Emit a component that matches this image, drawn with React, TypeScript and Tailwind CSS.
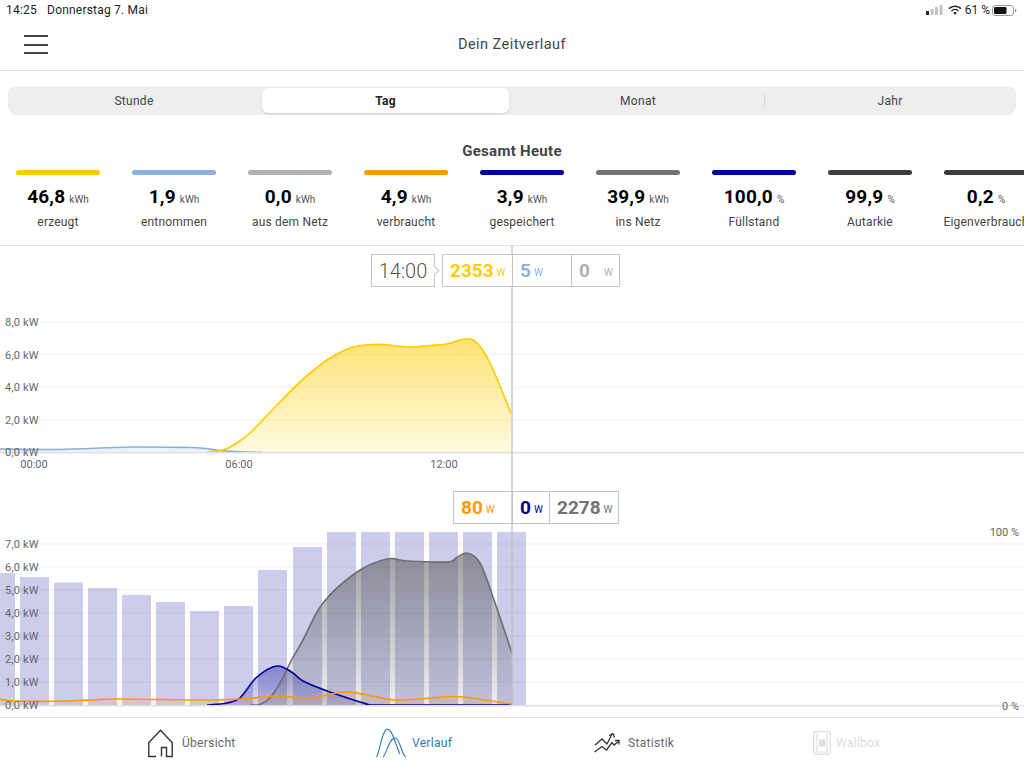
import { Fragment } from 'react'

type Pt = [number, number]

// catmull-rom through the points, gives the soft curves of the charts
const smooth = (pts: Pt[]) => {
  let d = `M${pts[0][0]} ${pts[0][1]}`
  for (let i = 0; i < pts.length - 1; i++) {
    const p0 = pts[i - 1] || pts[i]
    const p1 = pts[i]
    const p2 = pts[i + 1]
    const p3 = pts[i + 2] || p2
    const c1x = p1[0] + (p2[0] - p0[0]) / 6
    const c1y = p1[1] + (p2[1] - p0[1]) / 6
    const c2x = p2[0] - (p3[0] - p1[0]) / 6
    const c2y = p2[1] - (p3[1] - p1[1]) / 6
    d += ` C${c1x.toFixed(1)} ${c1y.toFixed(1)} ${c2x.toFixed(1)} ${c2y.toFixed(1)} ${p2[0]} ${p2[1]}`
  }
  return d
}

const area = (pts: Pt[], base: number) =>
  `${smooth(pts)} L${pts[pts.length - 1][0]} ${base} L${pts[0][0]} ${base} Z`

const yellowLine: Pt[] = [[207, 452], [223, 450], [235, 444], [250, 433], [277, 405], [300, 382], [327, 360], [345, 350], [357, 346], [382, 344.5], [407, 347], [430, 345.5], [447, 344], [465, 339], [477, 343], [490, 363], [511, 413]]
const blueLine: Pt[] = [[0, 449], [60, 449.5], [130, 447], [190, 447.5], [205, 448.5], [225, 451], [262, 452.5]]
const grayLine: Pt[] = [[250, 705], [260, 704.5], [270, 698], [280, 683], [290, 663], [303, 640], [323, 603], [357, 572], [387, 559], [407, 561], [447, 562], [456, 558], [467, 553], [480, 563], [493, 597], [512, 653]]
const navyLine: Pt[] = [[207, 705], [227, 703], [240, 698], [257, 677], [277, 666], [293, 673], [303, 681], [330, 692], [367, 704], [378, 705], [512, 705]]
const orangeLine: Pt[] = [[0, 699], [15, 701], [67, 701], [117, 699], [200, 700], [240, 699], [277, 696], [310, 698], [343, 692], [363, 694], [397, 700], [443, 697], [463, 697], [512, 704]]

const bars: Pt[] = [[-14, 573], [20, 577], [54, 582.5], [88, 588], [122, 595], [156, 602], [190, 611], [224, 606], [258, 570], [293, 547], [327, 532], [361, 532], [395, 532], [429, 532], [463, 532], [497, 532]]

const stats = [
  { color: 'bg-[#ffcc00]', value: '46,8', unit: 'kWh', label: 'erzeugt' },
  { color: 'bg-[#8cb0de]', value: '1,9', unit: 'kWh', label: 'entnommen' },
  { color: 'bg-[#b0b0b0]', value: '0,0', unit: 'kWh', label: 'aus dem Netz' },
  { color: 'bg-[#ff9900]', value: '4,9', unit: 'kWh', label: 'verbraucht' },
  { color: 'bg-[#000099]', value: '3,9', unit: 'kWh', label: 'gespeichert' },
  { color: 'bg-[#727272]', value: '39,9', unit: 'kWh', label: 'ins Netz' },
  { color: 'bg-[#000099]', value: '100,0', unit: '%', label: 'Füllstand' },
  { color: 'bg-[#3c3c3c]', value: '99,9', unit: '%', label: 'Autarkie' },
  { color: 'bg-[#3c3c3c]', value: '0,2', unit: '%', label: 'Eigenverbrauch' },
]

function StatusIcons() {
  return (
    <div className="flex items-center">
      <svg width="17" height="10" viewBox="0 0 17 10">
        <rect x="0" y="6" width="3" height="4" rx="0.5" fill="#222" />
        <rect x="4.5" y="4" width="3" height="6" rx="0.5" fill="#c4c4c4" />
        <rect x="9" y="2" width="3" height="8" rx="0.5" fill="#c4c4c4" />
        <rect x="13.5" y="0" width="3" height="10" rx="0.5" fill="#c4c4c4" />
      </svg>
      <svg width="14" height="10" viewBox="0 0 14 10" className="ml-[5px]">
        <path d="M1 3.6a8.6 8.6 0 0 1 12 0" fill="none" stroke="#222" strokeWidth="1.5" />
        <path d="M3.4 6a5.2 5.2 0 0 1 7.2 0" fill="none" stroke="#222" strokeWidth="1.5" />
        <path d="M7 9.8 5.2 7.9a2.6 2.6 0 0 1 3.6 0Z" fill="#222" />
      </svg>
      <span className="ml-[3px] text-[12px] text-[#222]">61 %</span>
      <svg width="25" height="11" viewBox="0 0 25 11" className="ml-[2px]">
        <rect x="0.5" y="0.5" width="21" height="10" rx="2.6" fill="none" stroke="#999" />
        <rect x="2" y="2" width="12.5" height="7" rx="1.3" fill="#111" />
        <path d="M23 3.6c1 .3 1.4 1 1.4 1.9s-.4 1.6-1.4 1.9Z" fill="#999" />
      </svg>
    </div>
  )
}

function Grid({ ys, x1 }: { ys: number[]; x1: number }) {
  return (
    <>
      {ys.map((y) => (
        <line key={y} x1={x1} x2="1024" y1={y} y2={y} stroke="#f1f1f1" strokeWidth="1" />
      ))}
    </>
  )
}

function AxisLabels({ rows }: { rows: [string, number][] }) {
  return (
    <>
      {rows.map(([t, y]) => (
        <text key={t} x="5" y={y + 4} fontSize="11" fill="#666" letterSpacing="0.2">{t}</text>
      ))}
    </>
  )
}

function Chart1() {
  return (
    <div className="relative h-[244px] w-full">
      <svg className="block" width="1024" height="244" viewBox="0 246 1024 244">
        <defs>
          <linearGradient id="gy" x1="0" y1="0" x2="0" y2="1">
            <stop offset="0" stopColor="#ffcc00" stopOpacity="0.55" />
            <stop offset="1" stopColor="#ffcc00" stopOpacity="0.12" />
          </linearGradient>
        </defs>
        <Grid ys={[322, 354.5, 387, 420]} x1={38} />
        <path d={area(blueLine, 452)} fill="#8cb0de" fillOpacity="0.18" />
        <path d={area(yellowLine, 452)} fill="url(#gy)" />
        <path d={smooth(blueLine)} fill="none" stroke="#8cb0de" strokeWidth="1.6" />
        <path d={smooth(yellowLine)} fill="none" stroke="#ffcc00" strokeWidth="1.7" />
        <rect x="0" y="452" width="1024" height="1.5" fill="#e0e0e0" />
        <AxisLabels rows={[['8,0 kW', 322], ['6,0 kW', 354.5], ['4,0 kW', 387], ['2,0 kW', 420], ['0,0 kW', 452]]} />
        {[['00:00', 34], ['06:00', 239], ['12:00', 444]].map(([t, x]) => (
          <text key={t} x={x} y="468" textAnchor="middle" fontSize="11" fill="#666">{t}</text>
        ))}
        <line x1="512" x2="512" y1="246" y2="490" stroke="#bdbdbd" strokeWidth="1.2" />
      </svg>
      <div className="absolute left-[371px] top-[8px] flex h-[33px] w-[64px] items-center justify-center border border-[#c4c4c4] bg-white text-[20px] font-light text-[#555]">
        14:00
        <span className="absolute right-[-4px] top-[12px] h-[7px] w-[7px] rotate-45 border-r border-t border-[#c4c4c4] bg-white" />
      </div>
      <div className="absolute left-[442px] top-[8px] flex h-[33px] w-[178px] items-center border border-[#c4c4c4] bg-white">
        <div className="flex h-full w-[69px] items-center pl-[7px]">
          <span className="text-[19px] font-bold leading-none text-[#ffcc00]">2353</span>
          <span className="ml-[3px] mt-[4px] text-[10px] leading-none text-[#ffcc00]">W</span>
        </div>
        <div className="flex h-full w-[59px] items-center border-l border-[#c4c4c4] pl-[7px]">
          <span className="text-[19px] font-bold leading-none text-[#8cb0de]">5</span>
          <span className="ml-[3px] mt-[4px] text-[10px] leading-none text-[#8cb0de]">W</span>
        </div>
        <div className="flex h-full flex-1 items-center border-l border-[#c4c4c4] pl-[7px]">
          <span className="text-[19px] font-bold leading-none text-[#b0b0b0]">0</span>
          <span className="ml-[14px] mt-[4px] text-[10px] leading-none text-[#b0b0b0]">W</span>
        </div>
      </div>
    </div>
  )
}

function Chart2() {
  return (
    <div className="relative h-[227px] w-full">
      <svg className="block" width="1024" height="227" viewBox="0 490 1024 227">
        <defs>
          <linearGradient id="gg" x1="0" y1="0" x2="0" y2="1">
            <stop offset="0" stopColor="#555555" stopOpacity="0.55" />
            <stop offset="1" stopColor="#555555" stopOpacity="0.1" />
          </linearGradient>
          <linearGradient id="gn" x1="0" y1="0" x2="0" y2="1">
            <stop offset="0" stopColor="#000099" stopOpacity="0.35" />
            <stop offset="1" stopColor="#000099" stopOpacity="0.12" />
          </linearGradient>
        </defs>
        <Grid ys={[544, 567, 590, 613, 636, 659, 682]} x1={0} />
        {bars.map(([x, y]) => (
          <rect key={x} x={x} y={y} width="29" height={705 - y} fill="#000099" fillOpacity="0.2" />
        ))}
        <path d={area(orangeLine, 705)} fill="#ff9900" fillOpacity="0.12" />
        <path d={area(navyLine, 705)} fill="url(#gn)" />
        <path d={area(grayLine, 705)} fill="url(#gg)" />
        <path d={smooth(grayLine)} fill="none" stroke="#6e6e6e" strokeWidth="1.6" />
        <path d={smooth(navyLine)} fill="none" stroke="#000099" strokeWidth="1.6" />
        <path d={smooth(orangeLine)} fill="none" stroke="#ff9900" strokeWidth="1.6" />
        <rect x="0" y="705" width="1024" height="1.5" fill="#e0e0e0" />
        <AxisLabels rows={[['7,0 kW', 544], ['6,0 kW', 567], ['5,0 kW', 590], ['4,0 kW', 613], ['3,0 kW', 636], ['2,0 kW', 659], ['1,0 kW', 682], ['0,0 kW', 705]]} />
        <text x="1019" y="536" textAnchor="end" fontSize="11" fill="#666">100 %</text>
        <text x="1019" y="710" textAnchor="end" fontSize="11" fill="#666">0 %</text>
        <line x1="512" x2="512" y1="490" y2="705" stroke="#bdbdbd" strokeWidth="1.2" />
      </svg>
      <div className="absolute left-[453px] top-[1px] flex h-[33px] w-[166px] items-center border border-[#c4c4c4]">
        <div className="flex h-full w-[58px] items-center pl-[7px]">
          <span className="text-[19px] font-bold leading-none text-[#ff9900]">80</span>
          <span className="ml-[3px] mt-[4px] text-[10px] leading-none text-[#ff9900]">W</span>
        </div>
        <div className="flex h-full w-[37px] items-center border-l border-[#c4c4c4] pl-[7px]">
          <span className="text-[19px] font-bold leading-none text-[#000099]">0</span>
          <span className="ml-[3px] mt-[4px] text-[10px] leading-none text-[#000099]">W</span>
        </div>
        <div className="flex h-full flex-1 items-center border-l border-[#c4c4c4] bg-white pl-[7px]">
          <span className="text-[19px] font-bold leading-none text-[#727272]">2278</span>
          <span className="ml-[3px] mt-[4px] text-[10px] leading-none text-[#727272]">W</span>
        </div>
      </div>
    </div>
  )
}

function BottomNav() {
  return (
    <div className="flex h-[51px] items-center border-t border-[#e2e2e2] pl-[148px]">
      <div className="flex w-[228px] items-center">
        <svg width="25" height="29" viewBox="0 0 25 29" fill="none" stroke="#333" strokeWidth="1.4">
          <path d="M8 27.5H.8V13.5L12.5 1.2 24.2 13.5V27.5H18.5V18.5H13.5V27.5" />
        </svg>
        <span className="ml-[9px] text-[12px] tracking-[0.3px] text-[#666]">Übersicht</span>
      </div>
      <div className="flex w-[218px] items-center">
        <svg width="30" height="30" viewBox="0 0 30 30" fill="none" stroke="#2a78bd" strokeWidth="1.1">
          <path d="M0.5 29C4 24 5 5 10.5 1.5 16 -1 19 16 24 26" />
          <path d="M7 29C11 25 13 10 19 10 24 10 25 25 29.5 29" />
        </svg>
        <span className="ml-[6px] text-[12px] tracking-[0.3px] text-[#2a78bd]">Verlauf</span>
      </div>
      <div className="flex w-[219px] items-center">
        <svg width="26" height="20" viewBox="0 0 26 20" fill="none" stroke="#333" strokeWidth="1.3">
          <path d="M1 12 8 6 13 11 18 1" />
          <path d="M15 2.5 19 0.5 20.5 4.5" />
          <path d="M0.5 19 8 13.5 12.5 17 18 9.5 20 12 25 8" />
          <path d="M21 7.5 25 7.5 25 11.5" />
        </svg>
        <span className="ml-[8px] text-[12px] tracking-[0.3px] text-[#666]">Statistik</span>
      </div>
      <div className="flex items-center">
        <svg width="18" height="24" viewBox="0 0 18 24" fill="none" stroke="#dcdcdc" strokeWidth="1.1">
          <rect x="0.6" y="0.6" width="16.8" height="22.8" rx="2.5" />
          <path d="M4 2v19h10V2" />
          <rect x="6.5" y="9" width="5.5" height="6" fill="#dcdcdc" />
        </svg>
        <span className="ml-[5px] text-[12px] tracking-[0.3px] text-[#dcdcdc]">Wallbox</span>
      </div>
    </div>
  )
}

export default function App() {
  return (
    <div className="h-[768px] w-[1024px] overflow-hidden bg-white font-['Roboto','Liberation_Sans',sans-serif]">
      <div className="flex h-[20px] items-center justify-between pl-[6px] pr-[7px]">
        <div className="text-[12px] tracking-[0.2px] text-[#222]">
          14:25 <span className="ml-[7px]">Donnerstag 7. Mai</span>
        </div>
        <StatusIcons />
      </div>

      <div className="relative flex h-[51px] items-center justify-center border-b border-[#e0e0e0]">
        <div className="absolute left-[24px] top-[15px] flex w-[24px] flex-col gap-[6.5px]">
          <span className="block h-[2px] bg-[#444]" />
          <span className="block h-[2px] bg-[#444]" />
          <span className="block h-[2px] bg-[#444]" />
        </div>
        <span className="text-[14.5px] tracking-[0.45px] text-[#444]">Dein Zeitverlauf</span>
      </div>

      <div className="mx-[8px] mt-[15px] grid h-[29px] grid-cols-4 rounded-lg bg-[#eeeeee] text-[12px] tracking-[0.3px] text-[#444]">
        <div className="flex items-center justify-center">Stunde</div>
        <div className="my-[2px] ml-[2px] mr-[3px] flex items-center justify-center rounded-md bg-white font-bold text-[#222] shadow-[0_1px_2px_rgba(0,0,0,0.15)]">Tag</div>
        <div className="flex items-center justify-center">Monat</div>
        <div className="relative flex items-center justify-center">
          <span className="absolute left-0 top-[7px] h-[15px] w-px bg-[#d8d8d8]" />
          Jahr
        </div>
      </div>

      <div className="mt-[26px] h-[20px] text-center text-[15px] font-bold leading-[20px] tracking-[0.3px] text-[#444]">Gesamt Heute</div>

      <div className="mt-[9px] flex h-[60px] overflow-hidden">
        {stats.map((s, i) => (
          <Fragment key={i}>
            <div className="flex w-[116px] shrink-0 flex-col items-center">
              <div className={`h-[5px] w-[84px] rounded-full ${s.color}`} />
              <div className="mt-[10px] flex h-[24px] items-center justify-center">
                <span className="text-[19px] font-bold tracking-[0.2px] text-black">{s.value}</span>
                <span className="ml-[4px] mt-[5px] text-[10px] text-[#555]">{s.unit}</span>
              </div>
              <div className="mt-[5px] whitespace-nowrap text-[12px] leading-[16px] tracking-[0.2px] text-[#444]">{s.label}</div>
            </div>
          </Fragment>
        ))}
      </div>

      <div className="mt-[15px] h-px bg-[#e2e2e2]" />

      <Chart1 />
      <Chart2 />
      <BottomNav />
    </div>
  )
}
